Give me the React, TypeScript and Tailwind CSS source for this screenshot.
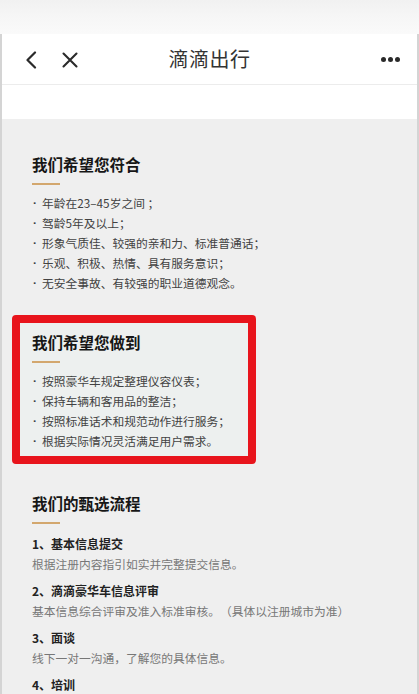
import React from "react";

const font = { fontFamily: '"Noto Sans CJK SC", "Noto Sans", sans-serif' };

function Heading({ children }: { children: React.ReactNode }) {
  return (
    <div>
      <div className="text-[15.5px] leading-[22px] font-bold text-[#161616]">{children}</div>
      <div className="mt-2 w-[28px] h-[2px] bg-[#d3a76e]" />
    </div>
  );
}

function Bullets({ items }: { items: string[] }) {
  return (
    <ul className="mt-2">
      {items.map((t) => (
        <li key={t} className="flex text-[11.75px] leading-[20px] text-[#424242]">
          <span className="w-[10px] shrink-0 pl-[1px] font-['Liberation_Sans'] font-bold overflow-hidden">·</span>
          <span>{t}</span>
        </li>
      ))}
    </ul>
  );
}

export default function App() {
  const steps = [
    ["1、基本信息提交", "根据注册内容指引如实并完整提交信息。"],
    ["2、滴滴豪华车信息评审", "基本信息综合评审及准入标准审核。（具体以注册城市为准）"],
    ["3、面谈", "线下一对一沟通，了解您的具体信息。"],
    ["4、培训", ""],
  ];
  return (
    <div style={font} className="w-[419px] h-[694px] overflow-hidden bg-[#efefef] [text-spacing-trim:space-all]">
      <div className="h-[34px] bg-gradient-to-b from-[#f1f1f1] via-[#f6f6f6] to-[#fafafa]" />
      <div className="border-l-2 border-r-2 border-[#d4d4d4]">
        <div className="h-[51px] bg-white border-b border-[#ececec] flex items-center relative">
          <svg className="absolute left-[22px] top-[17px]" width="14" height="18" viewBox="0 0 14 18">
            <path d="M11 1.5 L3.5 9 L11 16.5" fill="none" stroke="#2a2a2a" strokeWidth="2.2" strokeLinecap="round" strokeLinejoin="round" />
          </svg>
          <svg className="absolute left-[59px] top-[17px]" width="18" height="18" viewBox="0 0 18 18">
            <path d="M2.5 2.5 L15.5 15.5 M15.5 2.5 L2.5 15.5" fill="none" stroke="#2a2a2a" strokeWidth="2.1" strokeLinecap="round" />
          </svg>
          <div className="w-full text-center text-[20px] text-[#333] tracking-[0.5px]">滴滴出行</div>
          <div className="absolute right-[17px] top-[23px] flex gap-[2px]">
            <span className="w-[5px] h-[5px] rounded-full bg-[#2a2a2a]" />
            <span className="w-[5px] h-[5px] rounded-full bg-[#2a2a2a]" />
            <span className="w-[5px] h-[5px] rounded-full bg-[#2a2a2a]" />
          </div>
        </div>
        <div className="h-[34px] bg-white" />
        <div className="pl-[30px] pt-[34px] pb-10 bg-[#efefef]">
          <Heading>我们希望您符合</Heading>
          <Bullets
            items={[
              "年龄在23–45岁之间 ；",
              "驾龄5年及以上；",
              "形象气质佳、较强的亲和力、标准普通话；",
              "乐观、积极、热情、具有服务意识；",
              "无安全事故、有较强的职业道德观念。",
            ]}
          />
          <div className="relative mt-[38px]">
            <div className="absolute left-[-20px] top-[-16px] w-[244px] h-[149px] border-[8px] border-[#e8141c] rounded-[4px] bg-[#edf0ef]" />
            <div className="relative">
              <Heading>我们希望您做到</Heading>
              <Bullets
                items={[
                  "按照豪华车规定整理仪容仪表；",
                  "保持车辆和客用品的整洁；",
                  "按照标准话术和规范动作进行服务；",
                  "根据实际情况灵活满足用户需求。",
                ]}
              />
            </div>
          </div>
          <div className="mt-[41px]">
            <Heading>我们的甄选流程</Heading>
            <div className="mt-[10px] flex flex-col gap-[7px]">
              {steps.map(([t, d]) => (
                <div key={t}>
                  <div className="text-[12px] leading-[20px] font-bold text-[#222]">{t}</div>
                  {d && <div className="text-[11.75px] leading-[20px] text-[#777]">{d}</div>}
                </div>
              ))}
            </div>
          </div>
        </div>
      </div>
    </div>
  );
}
